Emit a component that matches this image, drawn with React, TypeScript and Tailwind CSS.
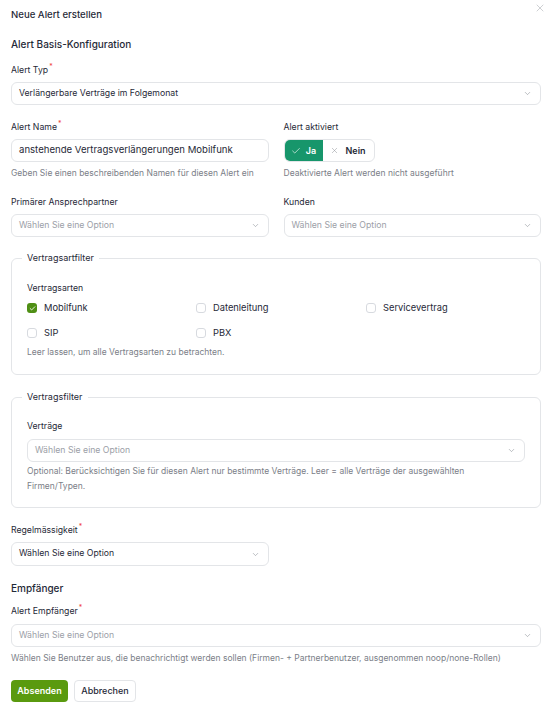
import { Check, ChevronDown, X } from "lucide-react";

//Small pieces
function Req() {
  return <span className="relative -top-[4px] ml-[1px] text-[7px] leading-[0] text-[#ef4444]">*</span>;
}

function Label({ children, req }: { children: React.ReactNode; req?: boolean }) {
  return (
    <div className="h-[12px] text-[8.7px] leading-[12px] text-[#1f2937]">
      {children}
      {req && <Req />}
    </div>
  );
}

function Help({ children, className = "" }: { children: React.ReactNode; className?: string }) {
  return <p className={`text-[8.5px] leading-[12px] text-[#7b8088] ${className}`}>{children}</p>;
}

function Select({ value, placeholder = true, className = "" }: { value: string; placeholder?: boolean; className?: string }) {
  return (
    <div
      className={`flex h-[23px] items-center justify-between rounded-[6px] border border-[#e3e5e8] bg-white pl-[7px] pr-[8px] ${className}`}
    >
      <span className={`text-[8.7px] ${placeholder ? "text-[#9ca0a7]" : "text-[#1f2937]"}`}>{value}</span>
      <ChevronDown size={9} strokeWidth={1.5} className="text-[#8a8f96]" />
    </div>
  );
}

function Box({ checked, label }: { checked?: boolean; label: string }) {
  return (
    <label className="flex h-[14px] items-center gap-[7px] text-[9.3px] text-[#1f2937]">
      {checked ? (
        <span className="flex h-[10px] w-[10px] items-center justify-center rounded-[3px] bg-[#4f8f15]">
          <Check size={7} strokeWidth={3} className="text-white" />
        </span>
      ) : (
        <span className="h-[10px] w-[10px] rounded-[3px] border border-[#d7dadf] bg-white" />
      )}
      {label}
    </label>
  );
}

export default function App() {
  return (
    <div className="min-h-[711px] w-[551px] bg-white pl-[11px] pr-[10px] pt-[8px] font-['Inter',sans-serif]">
      {/* Header */}
      <div className="relative flex h-[14px] items-center">
        <h2 className="text-[9.6px] font-medium leading-[14px] text-[#1f2937]">Neue Alert erstellen</h2>
        <button className="absolute -top-[6px] right-[-5px] text-[#9ca0a7]">
          <X size={12} strokeWidth={1} />
        </button>
      </div>

      {/* Basis */}
      <h3 className="mt-[15px] h-[14px] text-[10px] font-medium leading-[14px] text-[#1f2937]">
        Alert Basis-Konfiguration
      </h3>

      <div className="mt-[13px]">
        <Label req>Alert Typ</Label>
        <Select className="mt-[6px]" value="Verlängerbare Verträge im Folgemonat" placeholder={false} />
      </div>

      <div className="mt-[16px] grid grid-cols-2 gap-x-[15px]">
        <div>
          <Label req>Alert Name</Label>
          <div className="mt-[6px] flex h-[23px] items-center rounded-[6px] border border-[#e3e5e8] px-[7px] text-[9.6px] text-[#1f2937]">
            anstehende Vertragsverlängerungen Mobilfunk
          </div>
          <Help className="mt-[5px]">Geben Sie einen beschreibenden Namen für diesen Alert ein</Help>
        </div>
        <div>
          <Label>Alert aktiviert</Label>
          <div className="mt-[6px] flex h-[23px] w-[91px] overflow-hidden rounded-[6px] border border-[#e3e5e8]">
            <div className="flex w-[38px] items-center justify-center gap-[5px] bg-[#17966b] text-[9px] font-semibold text-white">
              <Check size={10} strokeWidth={1.5} />
              Ja
            </div>
            <div className="flex flex-1 items-center justify-center gap-[6px] text-[9px] font-semibold text-[#1f2937]">
              <X size={9} strokeWidth={1.3} className="text-[#8a8f96]" />
              Nein
            </div>
          </div>
          <Help className="mt-[5px]">Deaktivierte Alert werden nicht ausgeführt</Help>
        </div>
      </div>

      <div className="mt-[17px] grid grid-cols-2 gap-x-[15px]">
        <div>
          <Label>Primärer Ansprechpartner</Label>
          <Select className="mt-[6px]" value="Wählen Sie eine Option" />
        </div>
        <div>
          <Label>Kunden</Label>
          <Select className="mt-[6px]" value="Wählen Sie eine Option" />
        </div>
      </div>

      {/* Vertragsartfilter */}
      <fieldset className="mt-[15px] rounded-[6px] border border-[#e3e5e8] px-[15px] pb-[16px]">
        <legend className="-ml-[5px] h-[12px] px-[5px] text-[9px] leading-[12px] text-[#1f2937]">Vertragsartfilter</legend>
        <div className="mt-[18px]">
          <Label>Vertragsarten</Label>
        </div>
        <div className="mt-[7px] grid grid-cols-[169px_170px_1fr] gap-y-[11px]">
          <Box checked label="Mobilfunk" />
          <Box label="Datenleitung" />
          <Box label="Servicevertrag" />
          <Box label="SIP" />
          <Box label="PBX" />
        </div>
        <Help className="mt-[6px]">Leer lassen, um alle Vertragsarten zu betrachten.</Help>
      </fieldset>

      {/* Vertragsfilter */}
      <fieldset className="mt-[16px] rounded-[6px] border border-[#e3e5e8] px-[15px] pb-[13px]">
        <legend className="-ml-[5px] h-[12px] px-[5px] text-[9px] leading-[12px] text-[#1f2937]">Vertragsfilter</legend>
        <div className="mt-[17px]">
          <Label>Verträge</Label>
        </div>
        <Select className="mt-[7px]" value="Wählen Sie eine Option" />
        <Help className="mt-[2px] max-w-[450px] leading-[15px]">
          Optional: Berücksichtigen Sie für diesen Alert nur bestimmte Verträge. Leer = alle Verträge der ausgewählten
          Firmen/Typen.
        </Help>
      </fieldset>

      <div className="mt-[16px] w-[258px]">
        <Label req>Regelmässigkeit</Label>
        <Select className="mt-[6px] h-[24px]" value="Wählen Sie eine Option" placeholder={false} />
      </div>

      {/* Empfänger */}
      <h3 className="mt-[15px] h-[14px] text-[10px] font-medium leading-[14px] text-[#1f2937]">Empfänger</h3>

      <div className="mt-[10px]">
        <Label req>Alert Empfänger</Label>
        <Select className="mt-[7px]" value="Wählen Sie eine Option" />
        <Help className="mt-[5px]">
          Wählen Sie Benutzer aus, die benachrichtigt werden sollen (Firmen- + Partnerbenutzer, ausgenommen noop/none-Rollen)
        </Help>
      </div>

      <div className="mt-[16px] flex gap-[6px] pb-[8px]">
        <button className="h-[22px] w-[57px] rounded-[4px] bg-[#5a9a0f] text-[9px] font-semibold text-white">Absenden</button>
        <button className="h-[22px] w-[62px] rounded-[4px] border border-[#e3e5e8] bg-white text-[9px] font-medium text-[#1f2937]">
          Abbrechen
        </button>
      </div>
    </div>
  );
}
